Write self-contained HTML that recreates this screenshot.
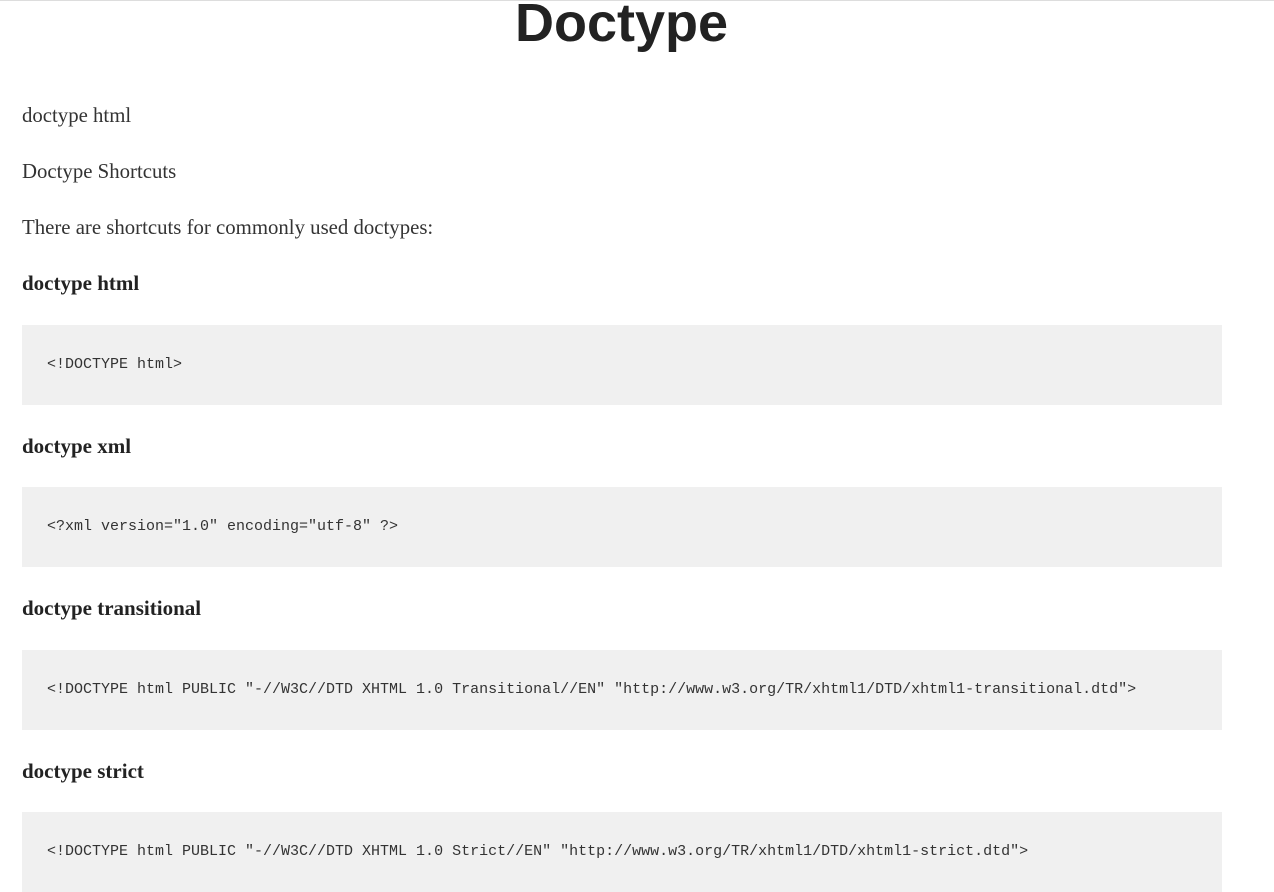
<!DOCTYPE html>
<html><head><style>
body{margin:0;width:1274px;height:892px;overflow:hidden;background:#fff;position:relative;border-top:1px solid #ddd;box-sizing:border-box}
.a{position:absolute;left:22px;font-family:"Liberation Serif",serif;font-size:20.8px;color:#333;line-height:24px;white-space:nowrap}
.b{font-weight:bold;color:#222;font-size:21px}
h1{position:absolute;top:-6px;left:0;width:1243px;text-align:center;margin:0;font-family:"Liberation Sans",sans-serif;font-weight:bold;font-size:54px;line-height:56px;color:#222}
.c{position:absolute;left:22px;width:1200px;height:80px;background:#f0f0f0;font-family:"Liberation Mono",monospace;font-size:15px;color:#333;line-height:80px;padding-left:25px;box-sizing:border-box;white-space:pre}
</style></head><body>
<h1>Doctype</h1>
<div class="a" style="top:103px">doctype html</div>
<div class="a" style="top:159px">Doctype Shortcuts</div>
<div class="a" style="top:215px">There are shortcuts for commonly used doctypes:</div>
<div class="a b" style="top:270px">doctype html</div>
<div class="c" style="top:324px">&lt;!DOCTYPE html&gt;</div>
<div class="a b" style="top:433px">doctype xml</div>
<div class="c" style="top:486px">&lt;?xml version="1.0" encoding="utf-8" ?&gt;</div>
<div class="a b" style="top:595px">doctype transitional</div>
<div class="c" style="top:649px">&lt;!DOCTYPE html PUBLIC "-//W3C//DTD XHTML 1.0 Transitional//EN" "http://www.w3.org/TR/xhtml1/DTD/xhtml1-transitional.dtd"&gt;</div>
<div class="a b" style="top:758px">doctype strict</div>
<div class="c" style="top:811px">&lt;!DOCTYPE html PUBLIC "-//W3C//DTD XHTML 1.0 Strict//EN" "http://www.w3.org/TR/xhtml1/DTD/xhtml1-strict.dtd"&gt;</div>
</body></html>
